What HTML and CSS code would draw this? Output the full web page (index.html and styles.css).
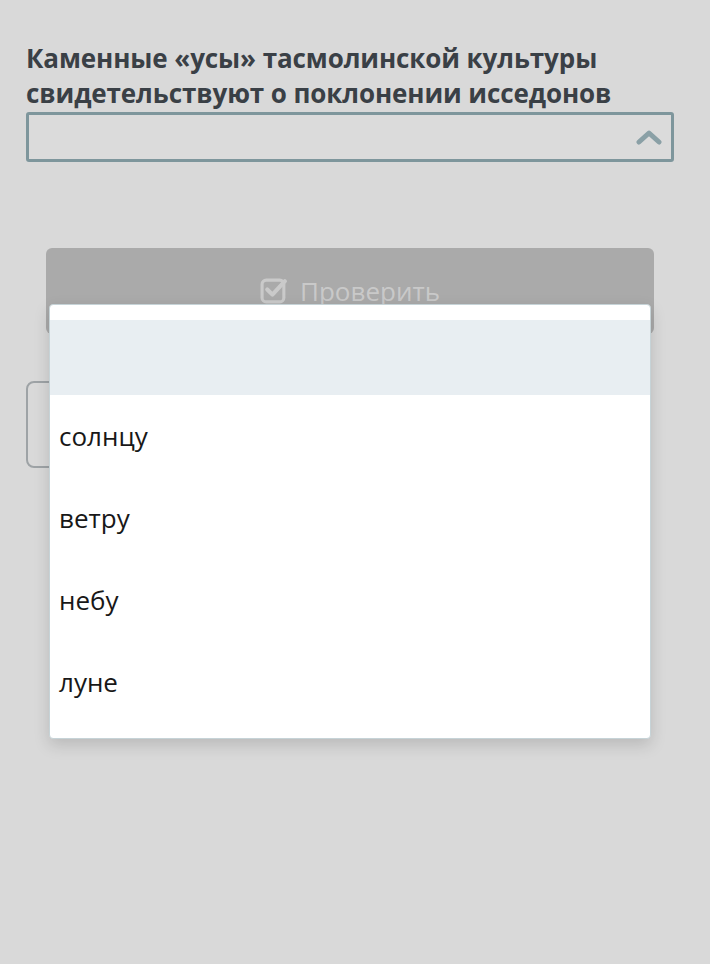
FILE: index.html
```html
<!DOCTYPE html>
<html lang="ru">
<head>
  <meta charset="UTF-8">
  <meta name="viewport" content="width=device-width, initial-scale=1.0">
  <title>Вопрос</title>
  <link rel="stylesheet" href="styles.css">
</head>
<body>
  <div class="page">
    <h1 class="question">Каменные «усы» тасмолинской культуры свидетельствуют о поклонении исседонов</h1>
    <div class="select">
      <svg class="chevron" width="26" height="16" viewBox="0 0 26 16">
        <path d="M3 13 L13 4 L23 13" fill="none" stroke="#8aa0a6" stroke-width="5" stroke-linecap="round" stroke-linejoin="round"/>
      </svg>
    </div>

    <div class="check-btn">
      <svg class="check-icon" width="28" height="27" viewBox="0 0 27 26">
        <rect x="2" y="3" width="21" height="21" rx="4" fill="none" stroke="#cacaca" stroke-width="3"/>
        <path d="M7 12 L12 17 L24 4" fill="none" stroke="#cacaca" stroke-width="4" stroke-linecap="round" stroke-linejoin="round"/>
      </svg>
      <span>Проверить</span>
    </div>

    <div class="next-box"></div>

    <ul class="dropdown">
      <li class="option active"></li>
      <li class="option">солнцу</li>
      <li class="option">ветру</li>
      <li class="option">небу</li>
      <li class="option">луне</li>
    </ul>
  </div>
</body>
</html>
```

FILE: styles.css
```css
body { margin: 0; background: #d9d9d9; font-family: "Open Sans", "Noto Sans", sans-serif; }
.page { position: relative; min-height: 964px; box-sizing: border-box; padding: 41px 36px 0 26px; }
.question { margin: 0; font-size: 26px; line-height: 35px; font-weight: 700; color: #3a4046; letter-spacing: -0.1px; }
.select { height: 44px; border: 3px solid #7e969c; border-radius: 3px; background: #dbdbdb; display: flex; align-items: center; justify-content: flex-end; padding-right: 9px; margin-top: 1px; }
.chevron { display: block; }
.check-btn { margin: 86px 20px 0; height: 86px; background: #aaaaaa; border-radius: 6px; display: flex; justify-content: center; padding-top: 27px; box-sizing: border-box; gap: 12px; color: #c9c9c9; font-size: 26px; line-height: 32px; }
.check-icon { margin-top: 2px; }
.next-box { margin-top: 47px; width: 620px; height: 83px; border: 2px solid #9ea3a6; border-radius: 8px; }
.dropdown { position: absolute; top: 304px; left: 49px; width: 600px; margin: 0; padding: 15px 0 15px; list-style: none; background: #fff; border: 1px solid #c6d3d7; border-radius: 4px; box-shadow: 0 6px 16px rgba(0, 0, 0, 0.15); }
.option { height: 82px; padding-left: 9px; display: flex; align-items: center; font-size: 26px; color: #181818; }
.option.active { height: 75px; background: #e8eef2; }
```
